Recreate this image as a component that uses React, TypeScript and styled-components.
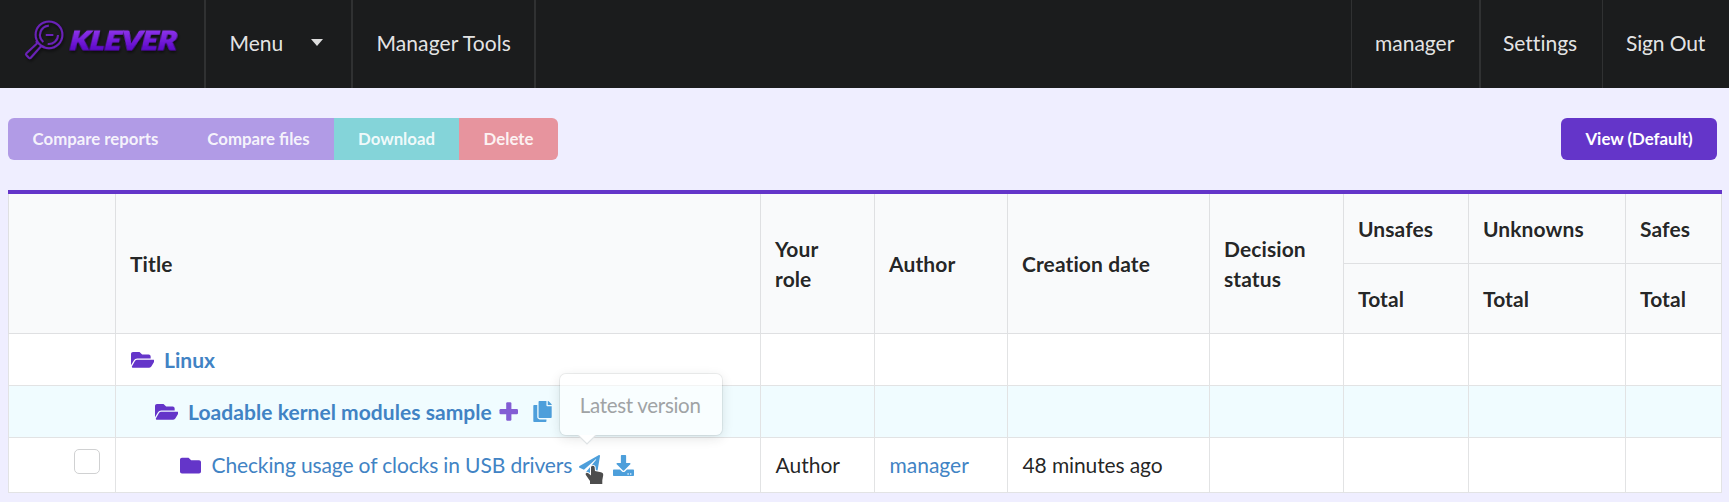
import React from "react";
import styled, { createGlobalStyle } from "styled-components";
import {
  FaCopy,
  FaDownload,
  FaFolder,
  FaFolderOpen,
  FaPaperPlane,
} from "react-icons/fa";

const GlobalStyle = createGlobalStyle`
  * { box-sizing: border-box; }
  body {
    margin: 0;
    background: #efeeff;
    font-family: Lato, "Liberation Sans", sans-serif;
    font-size: 21px;
    line-height: 30px;
    font-variant-ligatures: none;
    color: rgba(0, 0, 0, 0.87);
    overflow: hidden;
  }
`;

const NavBar = styled.nav`
  display: flex;
  height: 88px;
  background: #1b1c1d;
`;

const Brand = styled.div`
  width: 206px;
  padding: 15px 0 0 20px;
  border-right: 2px solid #303132;
`;

const NavItem = styled.a<{ $width: number; $line?: number; $side?: "left" | "right"; $track?: number }>`
  display: flex;
  align-items: center;
  width: ${(p) => p.$width}px;
  padding: 0 0 2px ${(p) => (p.$side === "left" && p.$line === 2 ? 22 : p.$side === "left" ? 23 : 23.5)}px;
  color: rgba(255, 255, 255, 0.9);
  border-${(p) => p.$side ?? "right"}: ${(p) => p.$line ?? 2}px solid #303132;
  letter-spacing: ${(p) => p.$track ?? 0}px;
  white-space: nowrap;
`;

const NavSpacer = styled.div`
  flex: 1;
`;

const Caret = styled.span`
  margin: -1px 0 0 28px;
  border: 6.5px solid transparent;
  border-top: 7px solid rgba(255, 255, 255, 0.85);
  border-bottom: 0;
`;

const Toolbar = styled.div`
  display: flex;
  justify-content: space-between;
  padding: 30px 12px 30px 8px;
`;

const ButtonGroup = styled.div`
  display: flex;
  border-radius: 6px;
  overflow: hidden;
`;

const Button = styled.button<{ $color: string; $width: number }>`
  width: ${(p) => p.$width}px;
  height: 42px;
  padding: 0;
  border: 0;
  background: ${(p) => p.$color};
  color: rgba(255, 255, 255, 0.9);
  font: 700 16.8px/42px Lato, "Liberation Sans", sans-serif;
  white-space: nowrap;
`;

const ViewButton = styled(Button)`
  border-radius: 6px;
  color: #fff;
`;

const Table = styled.div`
  display: grid;
  grid-template-columns: 108px 645px 114px 133px 202px 134px 125px 157px 96px;
  grid-template-rows: 70px 70px 52px 52px 55px;
  width: 1714px;
  margin-left: 8px;
  border-top: 4px solid #6435c9;
`;

const Cell = styled.div<{ $active?: boolean; $indent?: number; $first?: boolean }>`
  display: flex;
  align-items: center;
  padding-left: ${(p) => 14.5 + (p.$indent ?? 0)}px;
  background: ${(p) => (p.$active ? "#f0fcff" : "#fff")};
  border: 0 solid #e2e3e4;
  border-width: 0 1px 1px ${(p) => (p.$first ? 1 : 0)}px;
  white-space: nowrap;
`;

const HeadCell = styled(Cell)<{ $tall?: boolean }>`
  background: #f9fafb;
  font-weight: 700;
  letter-spacing: 0.1px;
  padding-left: 14px;
  border-color: #dfe0e2;
  grid-row: ${(p) => (p.$tall ? "1 / span 2" : "auto")};
  white-space: normal;
`;

const DateCell = styled(Cell)`
  letter-spacing: -0.12px;
`;

const Link = styled.a<{ $bold?: boolean; $track?: number }>`
  color: #4183c4;
  font-weight: ${(p) => (p.$bold ? 700 : 400)};
  letter-spacing: ${(p) => p.$track ?? 0}px;
`;

const IconBox = styled.span<{ $size: number; $color: string; $gap: number; $before?: number }>`
  position: relative;
  display: flex;
  flex: none;
  margin: 0 ${(p) => p.$gap}px 0 ${(p) => p.$before ?? 0}px;
  color: ${(p) => p.$color};
  font-size: ${(p) => p.$size}px;
`;

const Checkbox = styled.span`
  width: 26px;
  height: 25px;
  margin: -7px 0 0 50.5px;
  border: 1px solid #d0d1d2;
  border-radius: 5px;
  background: #fff;
`;

const Popup = styled.div`
  position: absolute;
  left: -19px;
  bottom: 41px;
  width: 162px;
  height: 61px;
  padding-left: 20px;
  border-radius: 6px;
  background: rgba(255, 255, 255, 0.6);
  box-shadow: 0 0 0 1px rgba(34, 36, 38, 0.07), 0 3px 12px rgba(34, 36, 38, 0.13);
  color: #a0a3a5;
  font-size: 20.5px;
  letter-spacing: -0.3px;
  line-height: 62px;
  white-space: nowrap;
`;

const PopupArrow = styled.svg`
  position: absolute;
  left: 17px;
  top: 61px;
`;

const Pointer = styled.svg`
  position: absolute;
  left: 5px;
  top: 8px;
`;

function Logo() {
  return (
    <svg width="170" height="50" viewBox="0 0 170 50">
      <defs>
        <linearGradient id="word" x1="0" y1="0" x2="0" y2="1">
          <stop offset="0.2" stopColor="#8b32ea" />
          <stop offset="0.8" stopColor="#5d08c8" />
        </linearGradient>
        <filter id="shade" x="-10%" y="-20%" width="120%" height="150%">
          <feDropShadow dx="1" dy="2" stdDeviation="1.5" floodColor="#000" floodOpacity="0.6" />
        </filter>
      </defs>
      <g fill="none" stroke="#6a22b8" strokeWidth="2" filter="url(#shade)">
        <circle cx="29" cy="19.800" r="13.4" />
        <path d="M28.800 10.700a9.2 9.2 0 0 0-5.5 16.2M38 20a9.2 9.2 0 0 1-10.3 9M25.800 19.900h7.5" />
        <path d="M16.400 25.900 17 28.500 6.400 38.300q-1 1 0 2l2.4 2.4q1 1 2 0l10.4-11.5 3.2.8" />
      </g>
      <text
        x="49"
        y="35.2"
        transform="translate(3.8 0) skewX(-6)"
        textLength="107"
        lengthAdjust="spacingAndGlyphs"
        fontFamily="Lato"
        fontWeight="900"
        fontStyle="italic"
        fontSize="26.5"
        fill="url(#word)"
        stroke="url(#word)"
        strokeWidth="1.2"
        filter="url(#shade)"
      >
        KLEVER
      </text>
    </svg>
  );
}

function PlusIcon() {
  return (
    <svg width="21" height="21" viewBox="0 0 21 21" fill="currentColor">
      <rect x="1.500" y="8" width="18.500" height="5.200" rx="1.200" />
      <rect x="8.200" y="1.300" width="5.200" height="18.500" rx="1.200" />
    </svg>
  );
}

const blank = (count: number, active = false) =>
  Array.from({ length: count }, (_, i) => <Cell key={i} $active={active} />);

export default function App() {
  return (
    <>
      <GlobalStyle />
      <NavBar>
        <Brand>
          <Logo />
        </Brand>
        <NavItem $width={147}>
          Menu
          <Caret />
        </NavItem>
        <NavItem $width={183} $track={0.09}>Manager Tools</NavItem>
        <NavSpacer />
        <NavItem $width={128} $line={1} $side="left">manager</NavItem>
        <NavItem $width={123} $line={2} $side="left">Settings</NavItem>
        <NavItem $width={127} $line={1} $side="left" $track={-0.13}>Sign Out</NavItem>
      </NavBar>
      <Toolbar>
        <ButtonGroup>
          <Button $color="#b19be6" $width={175}>Compare reports</Button>
          <Button $color="#b19be6" $width={151}>Compare files</Button>
          <Button $color="#84d4d9" $width={125}>Download</Button>
          <Button $color="#e7949e" $width={99}>Delete</Button>
        </ButtonGroup>
        <ViewButton $color="#6435c9" $width={156}>View (Default)</ViewButton>
      </Toolbar>
      <Table>
        <HeadCell $tall $first />
        <HeadCell $tall>Title</HeadCell>
        <HeadCell $tall>Your<br />role</HeadCell>
        <HeadCell $tall>Author</HeadCell>
        <HeadCell $tall>Creation date</HeadCell>
        <HeadCell $tall>Decision<br />status</HeadCell>
        <HeadCell>Unsafes</HeadCell>
        <HeadCell>Unknowns</HeadCell>
        <HeadCell>Safes</HeadCell>
        <HeadCell>Total</HeadCell>
        <HeadCell>Total</HeadCell>
        <HeadCell>Total</HeadCell>

        <Cell $first />
        <Cell>
          <IconBox $size={23.6} $color="#6435c9" $gap={10}><FaFolderOpen /></IconBox>
          <Link $bold>Linux</Link>
        </Cell>
        {blank(7)}

        <Cell $first $active />
        <Cell $active $indent={24}>
          <IconBox $size={23.6} $color="#6435c9" $gap={10}><FaFolderOpen /></IconBox>
          <Link $bold $track={0.05}>Loadable kernel modules sample</Link>
          <IconBox $size={21} $color="#835dd4" $gap={13} $before={6}><PlusIcon /></IconBox>
          <IconBox $size={21} $color="#4d9fdb" $gap={0}><FaCopy /></IconBox>
        </Cell>
        {blank(7, true)}

        <Cell $first>
          <Checkbox />
        </Cell>
        <Cell $indent={49}>
          <IconBox $size={21} $color="#6435c9" $gap={11}><FaFolder /></IconBox>
          <Link $track={-0.13}>Checking usage of clocks in USB drivers</Link>
          <IconBox $size={21} $color="#4d9fdb" $gap={13} $before={6.5}>
            <FaPaperPlane />
            <Popup>
              Latest version
              <PopupArrow width="20" height="11" viewBox="0 0 20 11">
                <path d="M1 0 10 9 19 0" fill="#fff" stroke="#dfe3e5" strokeWidth="1.2" />
              </PopupArrow>
            </Popup>
            <Pointer width="22" height="24" viewBox="-2 -2 22 24">
              <path
                d="M5 2a2 2 0 0 1 3.6 0L9 6l6 1.2q2.5.5 2.2 3l-.9 5V19H4v-3L-.3 9.8q-.5-1.5 1-2 1.5-.3 4.3 2.700z"
                fill="#4d4d4d"
                stroke="#fff"
                strokeWidth="2"
                paintOrder="stroke"
              />
            </Pointer>
          </IconBox>
          <IconBox $size={21} $color="#4d9fdb" $gap={0}><FaDownload /></IconBox>
        </Cell>
        <Cell>Author</Cell>
        <Cell><Link>manager</Link></Cell>
        <DateCell>48 minutes ago</DateCell>
        {blank(4)}
      </Table>
    </>
  );
}
